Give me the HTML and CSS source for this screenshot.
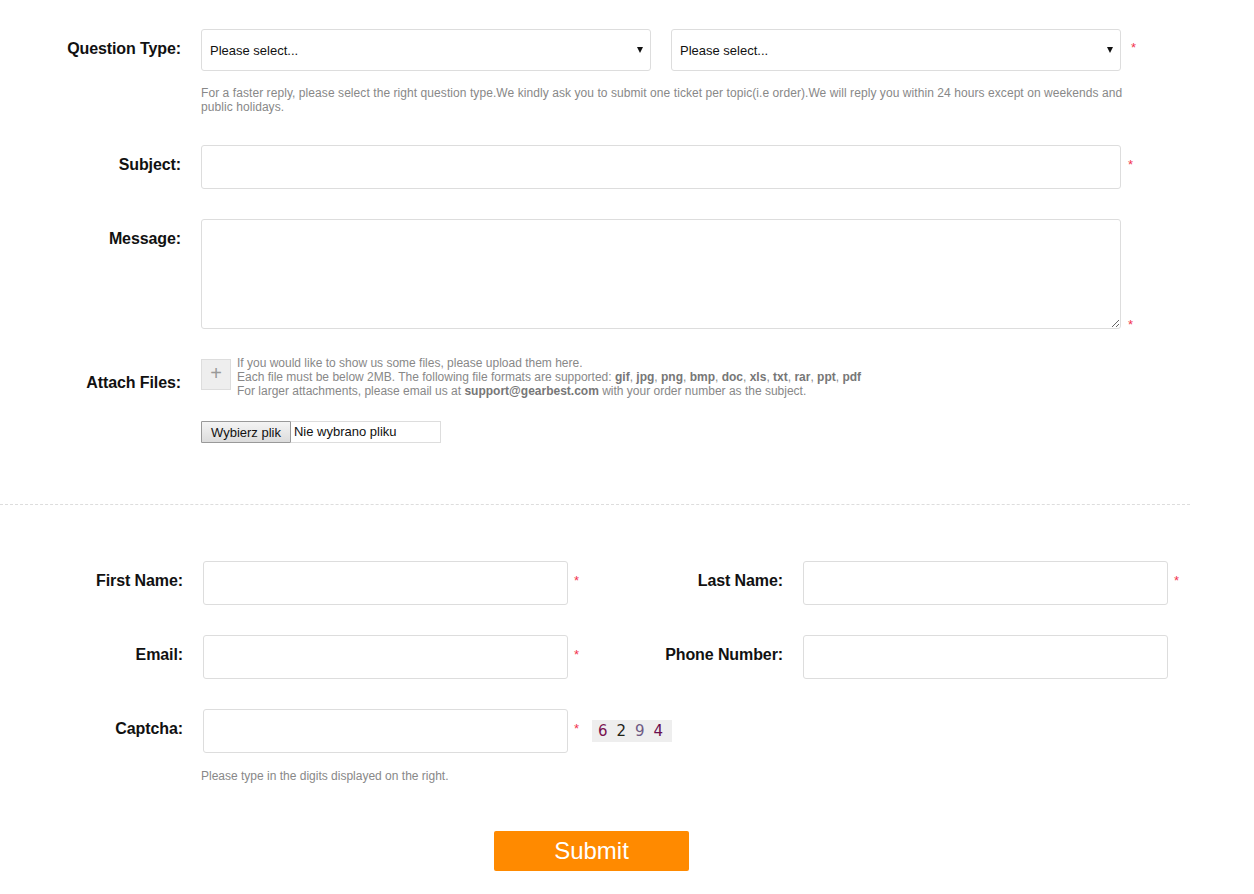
FILE: index.html
```html
<!DOCTYPE html>
<html lang="en">
<head>
<meta charset="utf-8">
<title>Ticket</title>
<link rel="stylesheet" href="styles.css">
</head>
<body>
<form class="form">
  <section class="top">
    <div class="row row-qt">
      <label class="lbl">Question Type:</label>
      <div class="field">
        <div class="selects">
          <div class="sel"><select><option>Please select...</option></select><span class="arrow"></span></div>
          <div class="sel"><select><option>Please select...</option></select><span class="arrow"></span></div>
          <span class="req req-top">*</span>
        </div>
        <p class="hint">For a faster reply, please select the right question type.We kindly ask you to submit one ticket per topic(i.e order).We will reply you within 24 hours except on weekends and public holidays.</p>
      </div>
    </div>

    <div class="row">
      <label class="lbl">Subject:</label>
      <div class="field inline">
        <input class="txt wide" type="text">
        <span class="req req-top">*</span>
      </div>
    </div>

    <div class="row">
      <label class="lbl">Message:</label>
      <div class="field inline">
        <textarea class="area"></textarea>
        <span class="req req-bottom">*</span>
      </div>
    </div>

    <div class="row row-attach">
      <label class="lbl lbl-attach">Attach Files:</label>
      <div class="field">
        <div class="attach">
          <span class="plus">+</span>
          <div class="attach-text">
            <p>If you would like to show us some files, please upload them here.</p>
            <p>Each file must be below 2MB. The following file formats are supported: <b>gif</b>, <b>jpg</b>, <b>png</b>, <b>bmp</b>, <b>doc</b>, <b>xls</b>, <b>txt</b>, <b>rar</b>, <b>ppt</b>, <b>pdf</b></p>
            <p>For larger attachments, please email us at <b>support@gearbest.com</b> with your order number as the subject.</p>
          </div>
        </div>
        <div class="file">
          <button type="button" class="file-btn">Wybierz plik</button>
          <span class="file-name">Nie wybrano pliku</span>
        </div>
      </div>
    </div>
  </section>

  <hr class="sep">

  <section class="bottom">
    <div class="grid">
      <div class="cell">
        <label class="lbl2">First Name:</label>
        <input class="txt half" type="text">
        <span class="req req-top">*</span>
      </div>
      <div class="cell">
        <label class="lbl2">Last Name:</label>
        <input class="txt half" type="text">
        <span class="req req-top">*</span>
      </div>
      <div class="cell">
        <label class="lbl2">Email:</label>
        <input class="txt half" type="text">
        <span class="req req-top">*</span>
      </div>
      <div class="cell">
        <label class="lbl2">Phone Number:</label>
        <input class="txt half" type="text">
      </div>
      <div class="cell">
        <label class="lbl2">Captcha:</label>
        <input class="txt half" type="text">
        <span class="req req-top">*</span>
        <span class="captcha"><span class="d1">6</span><span class="d2">2</span><span class="d3">9</span><span class="d4">4</span></span>
      </div>
    </div>
    <p class="cap-hint">Please type in the digits displayed on the right.</p>
    <div class="actions">
      <button type="button" class="submit">Submit</button>
    </div>
  </section>
</form>
</body>
</html>
```

FILE: styles.css
```css
html, body {
  margin: 0;
  padding: 0;
  background: #fff;
}
body {
  font-family: "Liberation Sans", Arial, sans-serif;
  color: #111;
  width: 1254px;
}
.form {
  padding-top: 29px;
}
p { margin: 0; }

.row {
  display: flex;
  align-items: flex-start;
  margin-bottom: 30px;
}
.row-qt { margin-bottom: 31px; }
.lbl, .lbl2 {
  font-size: 16px;
  font-weight: bold;
  line-height: 20px;
  text-align: right;
  color: #111;
  flex: none;
  letter-spacing: -0.1px;
}
.lbl {
  width: 181px;
  margin-right: 20px;
  padding-top: 10px;
}
.field { display: flex; flex-direction: column; }
.field.inline { flex-direction: row; align-items: flex-start; }

.selects { display: flex; align-items: flex-start; }
.sel {
  position: relative;
  width: 450px;
  height: 42px;
  margin-right: 20px;
}
.sel:nth-child(2) { margin-right: 0; }
.sel select {
  -webkit-appearance: none;
  appearance: none;
  width: 100%;
  height: 100%;
  box-sizing: border-box;
  border: 1px solid #ddd;
  border-radius: 3px;
  background: #fff;
  font-family: "Liberation Sans", Arial, sans-serif;
  font-size: 13px;
  color: #111;
  padding: 0 0 0 8px;
  outline: none;
}
.arrow {
  position: absolute;
  right: 8px;
  top: 18px;
  width: 0;
  height: 0;
  border-left: 3px solid transparent;
  border-right: 3px solid transparent;
  border-top: 6px solid #111;
}
.req {
  color: #f2334f;
  font-size: 13px;
  line-height: 13px;
  flex: none;
}
.req-top { margin-left: 10px; margin-top: 12px; }
.field.inline .req-top { margin-left: 7px; margin-top: 13px; }
.req-bottom { margin-left: 7px; align-self: flex-end; margin-bottom: -2px; }

.hint {
  width: 930px;
  margin-top: 15px;
  font-size: 12px;
  line-height: 14px;
  color: #888;
  letter-spacing: 0.07px;
}

.txt {
  box-sizing: border-box;
  height: 44px;
  border: 1px solid #ddd;
  border-radius: 3px;
  background: #fff;
  outline: none;
  padding: 0 8px;
  font-family: "Liberation Sans", Arial, sans-serif;
  font-size: 13px;
  flex: none;
}
.wide { width: 920px; }
.area {
  box-sizing: border-box;
  width: 920px;
  height: 110px;
  border: 1px solid #ddd;
  border-radius: 3px;
  outline: none;
  resize: vertical;
  display: block;
  font-family: "Liberation Sans", Arial, sans-serif;
  font-size: 13px;
}

.row-attach { margin-bottom: 0; margin-top: -3px; }
.lbl-attach { padding-top: 17px; }
.attach { display: flex; align-items: flex-start; }
.plus {
  box-sizing: border-box;
  width: 30px;
  height: 31px;
  margin-top: 3px;
  background: #eee;
  border: 1px solid #ddd;
  color: #999;
  font-size: 20px;
  line-height: 27px;
  text-align: center;
  flex: none;
}
.attach-text {
  margin-left: 6px;
  font-size: 12px;
  line-height: 14px;
  color: #888;
}
.attach-text b { color: #777; }
.file {
  display: flex;
  margin-top: 23px;
  width: 240px;
  height: 22px;
  box-sizing: border-box;
  border: 1px solid #ddd;
  align-items: stretch;
}
.file-btn {
  padding: 0 9px;
  border: 1px solid #999;
  margin: -1px 0 -1px -1px;
  background: linear-gradient(#f4f4f4, #dcdcdc);
  font-family: "Liberation Sans", Arial, sans-serif;
  font-size: 13px;
  color: #111;
  border-radius: 1px;
  height: 22px;
}
.file-name {
  font-size: 13px;
  line-height: 20px;
  padding-left: 3px;
  color: #111;
}

.sep {
  margin: 61px 0 0 0;
  width: 1190px;
  height: 0;
  border: 0;
  border-top: 1px dashed #ddd;
}

.bottom { padding-top: 56px; }
.grid {
  display: grid;
  grid-template-columns: 600px 600px;
  row-gap: 30px;
}
.cell { display: flex; align-items: flex-start; }
.lbl2 {
  width: 183px;
  margin-right: 20px;
  padding-top: 10px;
}
.half { width: 365px; }
.cell .req-top { margin-left: 6px; margin-top: 13px; }
.captcha {
  display: flex;
  margin-left: 13px;
  margin-top: 11px;
  width: 80px;
  height: 22px;
  background: #eee;
  font-family: "DejaVu Sans", sans-serif;
  font-size: 15px;
  line-height: 22px;
  padding-left: 6px;
  box-sizing: border-box;
}
.captcha span { width: 19px; }
.d1 { color: #7a1250; }
.d2 { color: #1f2418; }
.d3 { color: #6f5a84; }
.d4 { color: #6a0f4f; }

.cap-hint {
  margin: 16px 0 0 201px;
  font-size: 12px;
  line-height: 14px;
  color: #888;
}
.actions {
  margin-top: 48px;
  padding-left: 494px;
}
.submit {
  width: 195px;
  height: 40px;
  border: 0;
  border-radius: 2px;
  background: #ff8a00;
  color: #fff;
  font-family: "Liberation Sans", Arial, sans-serif;
  font-size: 24px;
  padding: 0;
}
```
